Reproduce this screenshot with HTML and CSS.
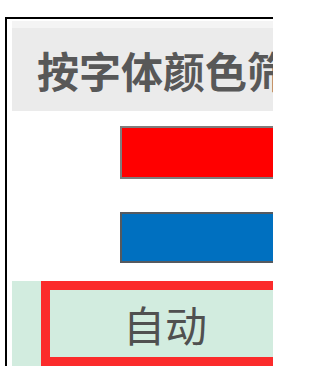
FILE: index.html
```html
<!DOCTYPE html>
<html lang="zh">
<head>
<meta charset="utf-8">
<link rel="stylesheet" href="styles.css">
</head>
<body>
<div class="frame">
  <div class="header">按字体颜色筛选</div>
  <div class="swatches">
    <div class="bar bar-red"></div>
    <div class="bar bar-blue"></div>
  </div>
  <div class="auto-row">
    <div class="auto-box">自动</div>
  </div>
</div>
</body>
</html>
```
FILE: styles.css
```css
html, body {
  margin: 0;
  padding: 0;
  background: #ffffff;
  width: 273px;
  height: 366px;
  overflow: hidden;
}
body {
  font-family: "Noto Sans CJK SC", "Noto Sans", sans-serif;
}
.frame {
  margin: 17px 0 0 5px;
  border-top: 2px solid #000;
  border-left: 2px solid #000;
  padding-left: 5px;
  width: 261px;
  height: 347px;
  overflow: hidden;
}
.header {
  margin-top: 2px;
  border-top: 7px solid #f4f4f4;
  height: 83px;
  line-height: 83px;
  background: #ebebeb;
  padding-left: 25px;
  font-size: 42px;
  font-weight: 700;
  color: #585858;
  white-space: nowrap;
  overflow: hidden;
}
.swatches {
  display: flex;
  flex-direction: column;
  gap: 33px;
  padding: 15px 0 18px 108px;
}
.bar {
  border: 2px solid #7d7d7d;
  border-right: none;
  box-sizing: border-box;
}
.bar-red {
  height: 53px;
  background: #ff0000;
}
.bar-blue {
  height: 51px;
  background: #0070c0;
  border-color: #555a60;
}
.auto-row {
  background: #d2ecdf;
  padding-left: 29px;
  height: 85px;
}
.auto-box {
  border: 9px solid #fb2b2b;
  border-right: none;
  height: 67px;
  line-height: 67px;
  padding-left: 73px;
  font-size: 42px;
  color: #505050;
  white-space: nowrap;
}
```
